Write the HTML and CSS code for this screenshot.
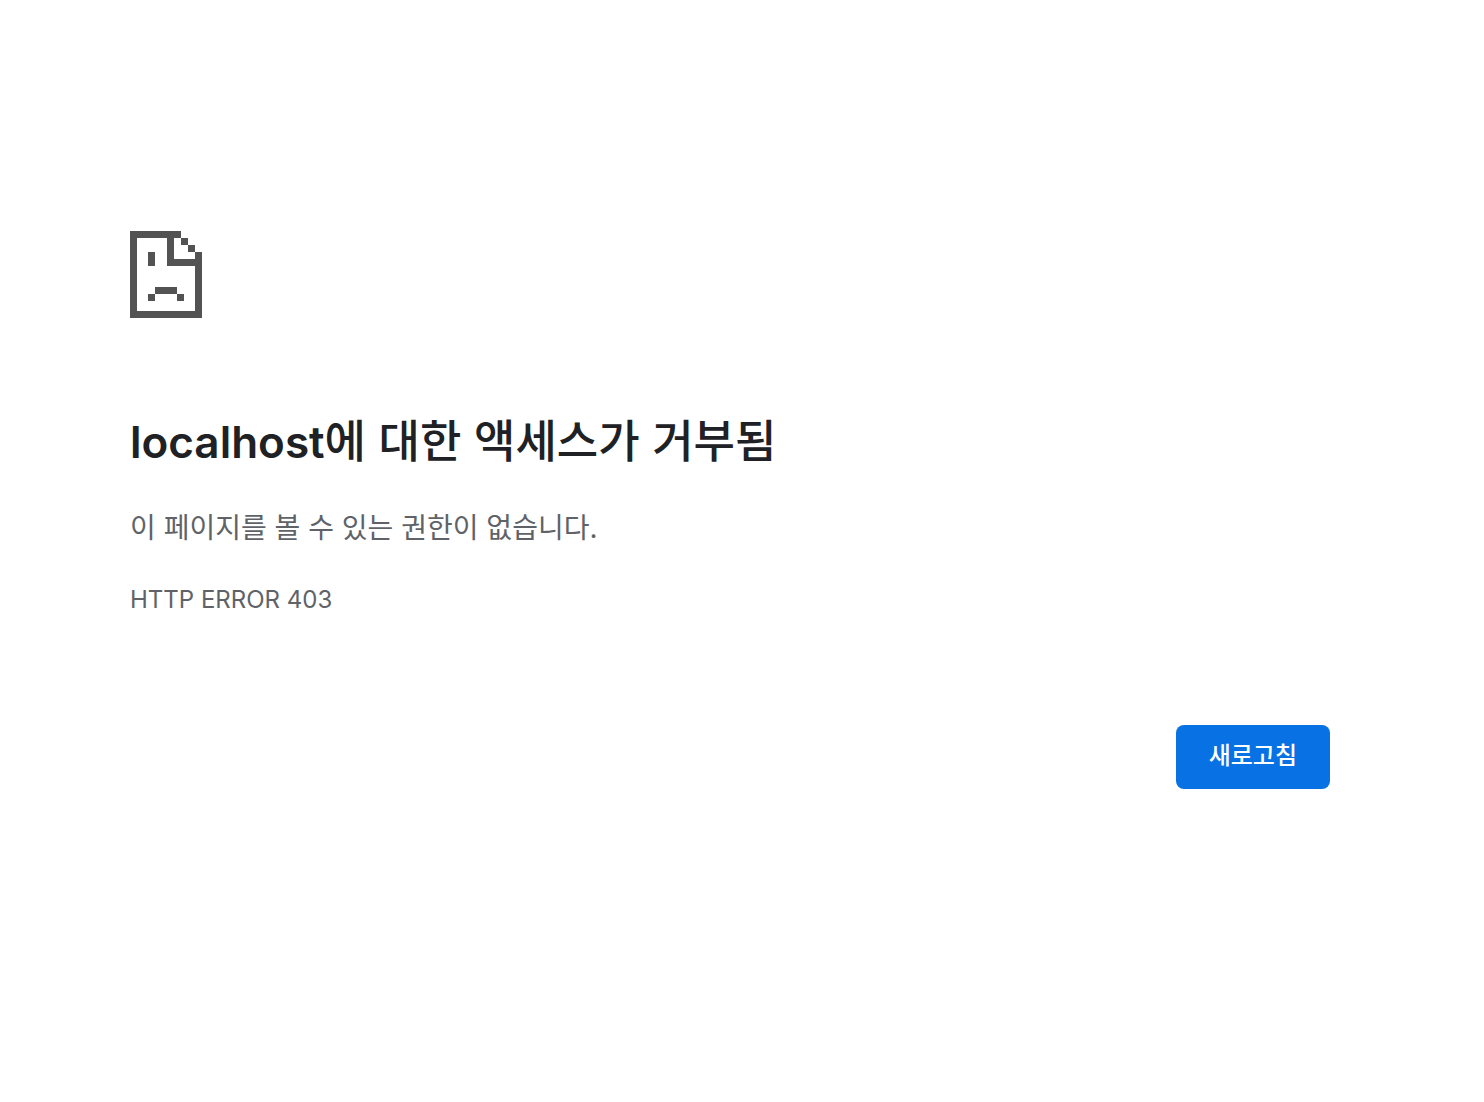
FILE: index.html
```html
<!DOCTYPE html>
<html lang="ko">
<head>
    <meta charset="utf-8">
    <meta name="viewport" content="width=device-width, initial-scale=1">
    <title>localhost</title>
    <link rel="stylesheet" href="styles.css">
</head>
<body>
    <main class="error-page">
        <svg class="error-icon" viewBox="0 0 72 87" shape-rendering="crispEdges" aria-hidden="true">
            <!-- page outline and folded corner -->
            <path d="M0 0H51V7H44V28H65V21H72V87H0ZM7 7V80H65V35H37V7Z" fill-rule="evenodd"/>
            <path d="M51 7H58V14H51ZM58 14H65V21H58Z"/>
            <!-- face -->
            <path d="M18 21H25V35H18ZM25 56H47V63H25ZM18 63H25V70H18ZM47 63H54V70H47Z"/>
        </svg>

        <h1><span class="host">localhost</span>에 대한 액세스가 거부됨</h1>
        <p class="message">이 페이지를 볼 수 있는 권한이 없습니다.</p>
        <div class="error-code">HTTP ERROR 403</div>

        <div class="buttons">
            <button type="button" class="reload-button" onclick="location.reload()">새로고침</button>
        </div>
    </main>
</body>
</html>
```

FILE: styles.css
```css
body {
    margin: 0;
    padding: 0 24px 0 0;
    background-color: #fff;
    color: #5f6368;
    font-family: Inter, 'Noto Sans CJK KR', sans-serif;
}

.error-page {
    max-width: 1200px;
    margin: 0 auto;
    padding-top: 231px;
}

.error-icon {
    display: block;
    width: 72px;
    height: 87px;
    fill: #535353;
}

h1 {
    margin: 91px 0 34px;
    color: #202124;
    font-family: 'Noto Sans CJK KR', sans-serif;
    font-size: 45px;
    font-weight: 500;
    line-height: 60px;
}

.host {
    font-family: Inter, sans-serif;
    font-size: 44px;
    font-weight: 600;
}

.message {
    margin: 0;
    font-size: 28px;
    line-height: 44px;
}

.error-code {
    margin-top: 32px;
    font-size: 24px;
    line-height: 36px;
}

.buttons {
    display: flex;
    justify-content: flex-end;
    margin-top: 107px;
}

.reload-button {
    padding: 13px 33px 15px;
    background-color: #0872e4;
    color: #fff;
    border: none;
    border-radius: 8px;
    font-family: inherit;
    font-size: 24px;
    font-weight: 500;
    line-height: 36px;
    cursor: pointer;
}

.reload-button:hover {
    background-color: #0662c6;
}
```
